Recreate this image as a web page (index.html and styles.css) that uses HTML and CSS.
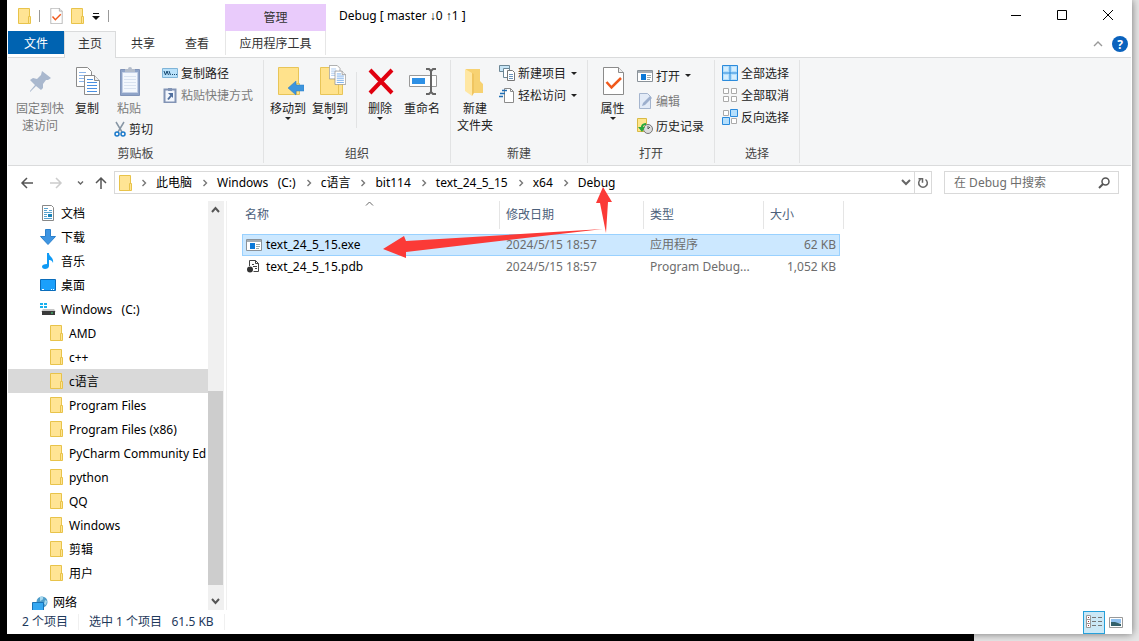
FILE: index.html
```html
<!DOCTYPE html>
<html lang="zh-CN">
<head>
  <meta charset="UTF-8" />
  <meta name="viewport" content="width=device-width, initial-scale=1.0" />
  <title>Debug</title>
  <link rel="stylesheet" href="styles.css">
</head>
<body>
  <!-- shared icons -->
  <svg class="defs" width="0" height="0">
    <symbol id="i-folder" viewBox="0 0 13 16">
      <path d="M.5 .5h11v15h-11z" fill="#ffe494" stroke="#e8c34a"/>
      <path d="M10.500 8.500h2v7h-2z" fill="#ffe494" stroke="#e8c34a"/>
    </symbol>
    <symbol id="i-check" viewBox="0 0 21 28">
      <path d="M.5 .5h15l5 5v22h-20z" fill="#fff" stroke="#8b8b8b"/>
      <path d="M15.500 .5v5h5" fill="#eee" stroke="#8b8b8b"/>
      <path d="M3.500 15l5 5.500 9.500-9.500" fill="none" stroke="#f0591c" stroke-width="2.500"/>
    </symbol>
    <symbol id="i-chev" viewBox="0 0 6 8">
      <path d="M1.500 1l3 3-3 3" fill="none" stroke="#777" stroke-width="1.400"/>
    </symbol>
    <symbol id="i-docs" viewBox="0 0 24 28">
      <path d="M.5 .5h11l4 4v15h-15z" fill="#fff" stroke="#8b8b8b"/>
      <path d="M3 5.500h7M3 8.500h8M3 11.500h8M3 14.500h8" stroke="#8ab4ea"/>
      <path d="M8.500 8.500h10l5 5v14h-15z" fill="#fff" stroke="#8b8b8b"/>
      <path d="M18.500 8.500v5h5" fill="#eee" stroke="#8b8b8b"/>
      <path d="M11 12.500h6M11 15.500h10M11 18.500h10M11 21.500h10M11 24.500h10" stroke="#4a90e2"/>
    </symbol>
    <symbol id="i-app" viewBox="0 0 16 12">
      <path d="M.5 .5h15v11h-15z" fill="#fff" stroke="#8a9299"/>
      <path d="M1 1h14v2h-14z" fill="#a5adb3"/>
      <path d="M4 4h5v6h-5z" fill="#0a78d7"/>
      <path d="M10 5.500h4M10 7.500h4M10 9.500h3" stroke="#9aa"/>
    </symbol>
  </svg>

  <main class="window">
    <header class="titlebar">
      <div class="quick">
        <svg class="folder" width="13" height="16"><use href="#i-folder"/></svg>
        <span class="bar"></span>
        <button aria-label="属性"><svg width="13" height="16"><use href="#i-check"/></svg></button>
        <button aria-label="新建文件夹"><svg width="13" height="16"><use href="#i-folder"/></svg></button>
        <button aria-label="自定义快速访问工具栏"><svg width="8" height="8"><path d="M1 1.500h6" stroke="#111"/><path d="M0 4h8l-4 4z" fill="#111"/></svg></button>
        <span class="bar"></span>
      </div>
      <div class="context">管理</div>
      <h1>Debug [ master <span class="arr">↓</span>0 <span class="arr">↑</span>1 ]</h1>
      <div class="controls">
        <button aria-label="最小化"><svg width="12" height="12"><path d="M1 5.500h10" stroke="#000"/></svg></button>
        <button aria-label="最大化"><svg width="12" height="12"><path d="M1.500 .5h9v9h-9z" fill="none" stroke="#000"/></svg></button>
        <button aria-label="关闭"><svg width="12" height="12"><path d="M1 0l10 10M11 0L1 10" stroke="#000"/></svg></button>
      </div>
    </header>

    <nav class="tabs">
      <button class="file">文件</button>
      <button class="active">主页</button>
      <button>共享</button>
      <button>查看</button>
      <button class="tools">应用程序工具</button>
      <div class="help">
        <button aria-label="最小化功能区"><svg width="10" height="6"><path d="M1 5l4-4 4 4" fill="none" stroke="#999" stroke-width="1.400"/></svg></button>
        <button aria-label="帮助" class="ask">?</button>
      </div>
    </nav>

    <section class="ribbon">
      <div class="group">
        <div class="tools-row">
          <button class="big off pin">
            <svg width="32" height="32" viewBox="0 0 32 32"><path d="M18 6l9 7-3 2-2 0-3 4 0 4-2 2-5-4-6 6 0-1 5-6-5-5 3-2 4 1 4-4z" fill="#a9b8ce"/></svg>
            固定到快<br>速访问
          </button>
          <button class="big copy"><svg width="32" height="32" viewBox="-5 -2 32 32"><use href="#i-docs" width="24" height="28"/></svg>复制</button>
          <div class="paste">
            <button class="big off">
              <svg width="32" height="32" viewBox="-1 0 32 32"><path d="M6.500 4.500h19v26h-19z" fill="#8ea3c8" stroke="#8093b8"/><path d="M8.500 7.500h15v20h-15z" fill="#f3f7fd" stroke="#c4d0e6"/><path d="M10 11.500h12M10 14.500h12M10 17.500h12M10 20.500h12M10 23.500h12" stroke="#d9e2f0"/><path d="M11 7V4h3a2 2 0 014 0h3v3z" fill="#b3bccb"/></svg>
              粘贴
            </button>
            <button class="small cut">
              <svg width="12" height="16"><path d="M2 1l6 10M10 1L4 11" stroke="#8796a5" stroke-width="1.500"/><circle cx="3" cy="13" r="2" fill="none" stroke="#1979ca" stroke-width="1.500"/><circle cx="9" cy="13" r="2" fill="none" stroke="#1979ca" stroke-width="1.500"/></svg>
              剪切
            </button>
          </div>
          <div class="stack">
            <button class="small"><svg width="16" height="16"><path d="M.5 3.500h15v9h-15z" fill="#b9e1fa" stroke="#7fb4d8"/><path d="M2 6l1.500 4 1.500-4 1.500 4M7 6l1.500 4M10 9.500h1M12 9.500h1M14 9.500h1" fill="none" stroke="#16476f"/></svg>复制路径</button>
            <button class="small off"><svg width="16" height="16"><path d="M2.500 2.500h11v13h-11z" fill="#f3f7fd" stroke="#8294b5" stroke-width="2"/><path d="M6 1h4v3h-4z" fill="#8294b5"/><path d="M6 12.500l4-5" fill="none" stroke="#506f9e" stroke-width="2"/><path d="M6 6h5v5z" fill="#506f9e"/></svg>粘贴快捷方式</button>
          </div>
        </div>
        <div class="name">剪贴板</div>
      </div>

      <div class="group">
        <div class="tools-row">
          <button class="big caret">
            <svg width="32" height="32" viewBox="-2 0 32 32"><path d="M4.500 2.500h20v27h-20z" fill="#ffe28c" stroke="#e8c558"/><path d="M22.500 18.500h3v11h-3z" fill="#ffe28c" stroke="#e8c558"/><path d="M14 23l8-7v4h8v6h-8v4z" fill="#3e95dd" stroke="#2a7cc4" stroke-width=".5"/></svg>
            移动到
          </button>
          <button class="big caret">
            <svg width="32" height="32" viewBox="-2 0 32 32"><path d="M4.500 2.500h18v27h-18z" fill="#ffe28c" stroke="#e8c558"/><path d="M22.500 18.500h4v11h-4z" fill="#ffe28c" stroke="#e8c558"/><use href="#i-docs" x="13" y="0" width="17" height="20"/></svg>
            复制到
          </button>
          <span class="split"></span>
          <button class="big caret del">
            <svg width="32" height="32" viewBox="0 0 32 32"><path d="M6 5l22 23M28 5L6 28" stroke="#e0000f" stroke-width="4"/></svg>
            删除
          </button>
          <button class="big rename">
            <svg width="32" height="32" viewBox="0 0 32 32"><path d="M3.500 10.500h27v11h-27z" fill="#fff" stroke="#999"/><path d="M6 13h13v6h-13z" fill="#2e90e5"/><path d="M20 4h3l2 2 2-2h3M20 29h3l2-2 2 2h3M25 5v23" fill="none" stroke="#666" stroke-width="2"/></svg>
            重命名
          </button>
        </div>
        <div class="name">组织</div>
      </div>

      <div class="group">
        <div class="tools-row">
          <button class="big new">
            <svg width="32" height="32" viewBox="0 0 32 32"><path d="M7 4h14v12l3 3v9H9z" fill="#f7d272"/><path d="M6 4l7 4v23l-7-5z" fill="#ffe7a3"/><path d="M13 8l2 1v19l-2 3z" fill="#f0c560"/></svg>
            新建<br>文件夹
          </button>
          <div class="stack">
            <button class="small"><svg width="16" height="16"><path d="M.5 .5h10v6h-10z" fill="#c8e6f7" stroke="#6c8796"/><path d="M4.500 3.500h6v9h-6z" fill="#fff" stroke="#6c8796"/><path d="M8.500 5.500h5l2 2v8h-7z" fill="#fff" stroke="#777"/><path d="M10 9.500h4M10 11.500h4M10 13.500h4" stroke="#6a94bd"/></svg>新建项目<i class="tri"></i></button>
            <button class="small"><svg width="16" height="16"><path d="M5.500 1.500h6l3 3v11h-9z" fill="#fff" stroke="#8b8b8b"/><path d="M11.500 1.500v3h3" fill="none" stroke="#8b8b8b"/><path d="M3 3.500h5M1 6.500h5M0 9.500h4" stroke="#206fb5" stroke-width="1.500"/></svg>轻松访问<i class="tri"></i></button>
          </div>
        </div>
        <div class="name">新建</div>
      </div>

      <div class="group">
        <div class="tools-row">
          <button class="big caret prop"><svg width="32" height="32" viewBox="-6 -2 32 32"><use href="#i-check" width="21" height="28"/></svg>属性</button>
          <div class="stack tall">
            <button class="small"><svg width="16" height="12"><use href="#i-app"/></svg>打开<i class="tri"></i></button>
            <button class="small off"><svg width="16" height="16"><path d="M2.500 .5h8l3 3v12h-11z" fill="#e3ebf7" stroke="#a5b5ce"/><path d="M5 13l1-3 7-7 2 2-7 7z" fill="#9dafcd"/></svg>编辑</button>
            <button class="small"><svg width="16" height="16"><path d="M.5 .5h9v13h-9z" fill="#ffe68c" stroke="#d9ba45"/><circle cx="11" cy="11" r="4.500" fill="#ddd" stroke="#777"/><path d="M11 8v3l2-2" fill="none" stroke="#555"/><path d="M9 5C4 5 4 9 4 9H1l4 5 3-5H6c0-2 3-2 3-2z" fill="#28a83c"/></svg>历史记录</button>
          </div>
        </div>
        <div class="name">打开</div>
      </div>

      <div class="group">
        <div class="tools-row">
          <div class="stack pick">
            <button class="small"><svg width="16" height="16"><path d="M.5 .5h15v15h-15zM8 0v16M0 8h16" fill="#b5dffc" stroke="#2b8bdc"/><path d="M2 2h4v4h-4zM10 2h4v4h-4zM2 10h4v4h-4zM10 10h4v4h-4z" fill="#d5eefe"/></svg>全部选择</button>
            <button class="small"><svg width="16" height="16"><path d="M1.500 1.500h5v5h-5zM9.500 1.500h5v5h-5zM1.500 9.500h5v5h-5zM9.500 9.500h5v5h-5z" fill="#fff" stroke="#aaa"/></svg>全部取消</button>
            <button class="small"><svg width="16" height="16"><path d="M1.500 1.500h5v5h-5zM9.500 9.500h5v5h-5z" fill="#fff" stroke="#aaa"/><path d="M8.500 .5h7v7h-7zM.5 8.500h7v7h-7z" fill="#b5dffc" stroke="#2b8bdc"/></svg>反向选择</button>
          </div>
        </div>
        <div class="name">选择</div>
      </div>
    </section>

    <section class="address">
      <div class="moves">
        <button aria-label="后退"><svg width="14" height="12"><path d="M13 6H2M7 1L2 6l5 5" fill="none" stroke="#555" stroke-width="1.500"/></svg></button>
        <button aria-label="前进"><svg width="14" height="12"><path d="M1 6h11M7 1l5 5-5 5" fill="none" stroke="#ccc" stroke-width="1.500"/></svg></button>
        <button aria-label="最近浏览的位置" class="recent"><svg width="7" height="6"><path d="M1 1.500l2.500 2.500 2.500-2.500" fill="none" stroke="#666" stroke-width="1.400"/></svg></button>
        <button aria-label="上移" class="up"><svg width="12" height="13"><path d="M6 13V2M1 7l5-5 5 5" fill="none" stroke="#555" stroke-width="1.500"/></svg></button>
      </div>
      <div class="path">
        <svg width="13" height="16"><use href="#i-folder"/></svg>
        <svg class="sep first" width="6" height="8"><use href="#i-chev"/></svg>
        <a href="#">此电脑</a><svg class="sep" width="6" height="8"><use href="#i-chev"/></svg>
        <a href="#">Windows&nbsp;&nbsp; (C:)</a><svg class="sep" width="6" height="8"><use href="#i-chev"/></svg>
        <a href="#">c语言</a><svg class="sep" width="6" height="8"><use href="#i-chev"/></svg>
        <a href="#">bit114</a><svg class="sep" width="6" height="8"><use href="#i-chev"/></svg>
        <a href="#">text_24_5_15</a><svg class="sep" width="6" height="8"><use href="#i-chev"/></svg>
        <a href="#">x64</a><svg class="sep" width="6" height="8"><use href="#i-chev"/></svg>
        <a href="#">Debug</a>
        <button aria-label="上一个位置" class="drop"><svg width="10" height="7"><path d="M1 1l4 4 4-4" fill="none" stroke="#666" stroke-width="2"/></svg></button>
        <button aria-label="刷新" class="refresh"><svg width="12" height="12"><path d="M8.500 2.500a4.300 4.300 0 11-5 0M1.500 1.700h4v4" fill="none" stroke="#666" stroke-width="1.500"/></svg></button>
      </div>
      <label class="search">
        <input type="text" placeholder="在 Debug 中搜索" aria-label="搜索">
        <svg width="12" height="12"><circle cx="7.500" cy="4.500" r="3.500" fill="none" stroke="#555" stroke-width="1.500"/><path d="M5 7l-4 4" stroke="#555" stroke-width="2"/></svg>
      </label>
    </section>

    <section class="content">
      <aside class="tree">
        <ul>
          <li><a href="#"><svg width="16" height="16"><path d="M2.500 .5h9l2 2v13h-11z" fill="#fff" stroke="#888"/><path d="M4 3.500h4M4 5.500h3M9 5.500h3M4 7.500h8M4 9.500h3M4 11.500h3M4 13.500h8" stroke="#58a3cf"/><path d="M8 9h4v3h-4z" fill="#1b82b8"/></svg>文档</a></li>
          <li><a href="#"><svg width="16" height="16"><path d="M5.500 .5h5v7h5L8 15.500.5 7.500h5z" fill="#3e95e2" stroke="#2b80cd"/></svg>下载</a></li>
          <li><a href="#"><svg width="16" height="16"><path d="M7 0h2c0 4 5 4 4 10-1-3-3-3-4-3v6c0 2-2 3-4 3s-3-1-3-2.500S4 11 7 11z" fill="#0f9af5"/></svg>音乐</a></li>
          <li><a href="#"><svg width="16" height="16"><path d="M.5 2.500h15v11h-15z" fill="#1ba0fb" stroke="#0a6dbb"/><path d="M2 12.500h2M11 12.500h1M13 12.500h1" stroke="#fff"/></svg>桌面</a></li>
          <li><a href="#"><svg width="16" height="16"><path d="M0 2h3v2h-3zM4 2h3v2h-3zM0 5h3v2h-3zM4 5h3v2h-3z" fill="#18b0ee"/><path d="M3 8h11l2 3H1z" fill="#c6c6c6"/><path d="M2 10h13v4h-13z" fill="#3a3a3a"/><path d="M11 12h2" stroke="#44e07a"/></svg>Windows&nbsp;&nbsp; (C:)</a></li>
          <li class="sub"><a href="#"><svg width="13" height="16"><use href="#i-folder"/></svg>AMD</a></li>
          <li class="sub"><a href="#"><svg width="13" height="16"><use href="#i-folder"/></svg>c++</a></li>
          <li class="sub on"><a href="#"><svg width="13" height="16"><use href="#i-folder"/></svg>c语言</a></li>
          <li class="sub"><a href="#"><svg width="13" height="16"><use href="#i-folder"/></svg>Program Files</a></li>
          <li class="sub"><a href="#"><svg width="13" height="16"><use href="#i-folder"/></svg>Program Files (x86)</a></li>
          <li class="sub"><a href="#"><svg width="13" height="16"><use href="#i-folder"/></svg>PyCharm Community Ed</a></li>
          <li class="sub"><a href="#"><svg width="13" height="16"><use href="#i-folder"/></svg>python</a></li>
          <li class="sub"><a href="#"><svg width="13" height="16"><use href="#i-folder"/></svg>QQ</a></li>
          <li class="sub"><a href="#"><svg width="13" height="16"><use href="#i-folder"/></svg>Windows</a></li>
          <li class="sub"><a href="#"><svg width="13" height="16"><use href="#i-folder"/></svg>剪辑</a></li>
          <li class="sub"><a href="#"><svg width="13" height="16"><use href="#i-folder"/></svg>用户</a></li>
          <li class="net"><a href="#"><svg width="16" height="16"><circle cx="10" cy="7" r="5.500" fill="#4f9dc9"/><path d="M8 2c2-1 4 0 3 2s-3 1-3 3M13 5l2 1-1 4-2-1z" fill="#a7d8ee"/><path d="M.5 7.500h11v8h-11z" fill="#35a8f2" stroke="#1a72b5"/></svg>网络</a></li>
        </ul>
      </aside>
      <div class="scroll">
        <button aria-label="向上滚动"><svg width="9" height="7"><path d="M1 6l3.500-4 3.500 4" fill="none" stroke="#555" stroke-width="2"/></svg></button>
        <div class="track"><div class="thumb"></div></div>
        <button aria-label="向下滚动"><svg width="9" height="7"><path d="M1 1l3.500 4 3.500-4" fill="none" stroke="#555" stroke-width="2"/></svg></button>
      </div>
      <div class="files">
        <table>
          <thead>
            <tr>
              <th class="c-name">名称<svg class="sort" width="9" height="5"><path d="M1 4.500l3.500-3.500 3.500 3.500" fill="none" stroke="#666"/></svg></th>
              <th class="c-date">修改日期</th>
              <th class="c-type">类型</th>
              <th class="c-size">大小</th>
              <th class="c-end"></th>
            </tr>
          </thead>
          <tbody>
            <tr class="on">
              <td><svg width="16" height="12"><use href="#i-app"/></svg>text_24_5_15.exe</td>
              <td>2024/5/15 18:57</td>
              <td>应用程序</td>
              <td>62 KB</td>
            </tr>
            <tr>
              <td><svg width="16" height="14"><path d="M3.500 7V1.500h6l3 3v8h-5" fill="#fff" stroke="#444"/><path d="M9.500 1.500v3h3M6 5.500h2M7 7.500h4M9 9.500h2" fill="none" stroke="#444"/><circle cx="4" cy="10.500" r="3" fill="#333"/></svg>text_24_5_15.pdb</td>
              <td>2024/5/15 18:57</td>
              <td>Program Debug...</td>
              <td>1,052 KB</td>
            </tr>
          </tbody>
        </table>
      </div>
    </section>

    <footer class="status">
      <span>2 个项目</span>
      <span>选中 1 个项目&nbsp;&nbsp; 61.5 KB</span>
      <div class="views">
        <button aria-label="详细信息" class="on"><svg width="16" height="14"><path d="M.5 .5h4v12h-4zM.5 4.500h4M.5 8.500h4" fill="#fff" stroke="#999"/><path d="M2 2.500h1M2 6.500h1M2 10.500h1" stroke="#a33"/><path d="M6 2.500h4M12 2.500h4M6 6.500h4M12 6.500h4M6 10.500h4M12 10.500h4" stroke="#777"/></svg></button>
        <button aria-label="大图标"><svg width="14" height="11"><path d="M.5 .5h13v10h-13z" fill="#fff" stroke="#999"/><path d="M2 2h10v4h-10z" fill="#8fc0ee"/><path d="M2 5l4 0 6 2v2h-10z" fill="#34616b"/></svg></button>
      </div>
    </footer>

    <svg class="marks" width="240" height="80" viewBox="380 180 240 80">
      <path d="M383 249l21-13 2 5 197-12-197 23 0 6z" fill="#fb3a37"/>
      <path d="M603 187l9 15h-4l-2 31-6-30h-4z" fill="#fb3a37"/>
    </svg>
  </main>
</body>
</html>
```
FILE: styles.css
```css
html, body {
  margin: 0;
  padding: 0;
  height: 100%;
}
body {
  box-sizing: border-box;
  padding: 0 7px 7px;
  font-family: "Noto Sans", "Noto Sans CJK SC", sans-serif;
  font-size: 12px;
  color: #000;
  overflow: hidden;
  background: #000 linear-gradient(#e6e6e6, #e6e6e6) no-repeat right / 165px 100%;
}
button {
  font: inherit;
  color: inherit;
  background: none;
  border: 0;
  padding: 0;
  display: flex;
  align-items: center;
  justify-content: center;
}
a {
  color: inherit;
  text-decoration: none;
}
svg {
  display: block;
  flex: none;
}
.defs {
  position: absolute;
}
.window {
  position: relative;
  box-sizing: border-box;
  height: 100%;
  padding: 0 1px;
  display: flex;
  flex-direction: column;
  background: #fff;
  box-shadow: 0 0 8px rgba(0,0,0,0.5);
}

/* title bar */
.titlebar {
  display: flex;
  height: 31px;
  align-items: center;
}
.quick {
  display: flex;
  align-items: center;
  box-sizing: border-box;
  width: 217px;
  padding-left: 10px;
  gap: 8px;
}
.quick .bar {
  width: 1px;
  height: 12px;
  margin-right: 2px;
  background: #999;
}
.context {
  width: 101px;
  height: 27px;
  line-height: 27px;
  align-self: flex-end;
  text-align: center;
  background: #e9cbfb;
  color: #333;
}
.titlebar h1 {
  flex: 1;
  margin: 0 0 0 13px;
  font-size: 12px;
  font-weight: normal;
}
.arr {
  font-family: "Liberation Sans", sans-serif;
}
.controls {
  display: flex;
}
.controls button {
  width: 46px;
  height: 30px;
}

/* tabs */
.tabs {
  display: flex;
  height: 26px;
  color: #333;
}
.tabs button {
  width: 54px;
  height: 24px;
}
.tabs .file {
  width: 56px;
  height: 23px;
  background: #0063b1;
  color: #fff;
}
.tabs .active {
  box-sizing: border-box;
  width: 52px;
  height: 27px;
  padding-bottom: 4px;
  border: 1px solid #dadbdc;
  border-bottom: 0;
  background: #f5f6f7;
  position: relative;
  z-index: 1;
}
.tabs .tools {
  box-sizing: border-box;
  width: 101px;
  margin-left: 1px;
  border: solid #e6e6e6;
  border-width: 0 1px;
}
.help {
  display: flex;
  align-items: center;
  margin-left: auto;
  gap: 9px;
  padding-right: 3px;
}
.tabs .help button {
  width: 10px;
}
.tabs .help .ask {
  width: 16px;
  height: 16px;
  border-radius: 50%;
  background: #0a62bd;
  color: #fff;
  font-weight: bold;
}

/* ribbon */
.ribbon {
  display: flex;
  padding: 2px 0;
  height: 103px;
  border: solid #dadbdc;
  border-width: 1px 0;
  background: #f5f6f7;
  color: #222;
}
.group {
  display: flex;
  flex-direction: column;
  border-right: 1px solid #e2e3e4;
}
.tools-row {
  display: flex;
  height: 85px;
}
.name {
  line-height: 18px;
  text-align: center;
  color: #444;
}
.big {
  flex-direction: column;
  justify-content: flex-start;
  align-self: flex-start;
  width: 42px;
  padding-top: 5px;
  line-height: 17px;
  white-space: nowrap;
}
.big svg {
  margin-bottom: 3px;
}
.big.pin {
  width: 64px;
}
.big.copy {
  width: 30px;
}
.big.caret::after, .tri {
  content: "";
  border: 3px solid transparent;
  border-top-color: #222;
  border-bottom: 0;
}
.big.del {
  width: 38px;
}
.big.rename {
  width: 46px;
}
.big.new {
  width: 48px;
}
.big.prop {
  width: 49px;
}
.off {
  color: #7b7b7b;
}
.split {
  width: 1px;
  height: 56px;
  margin: 12px 4px 0 5px;
  background: #e2e3e4;
}
.group:nth-child(2) .tools-row {
  padding: 0 5px 0 3px;
}
.group:nth-child(3) .tools-row, .group:nth-child(4) .tools-row {
  padding-right: 10px;
}
.paste .big {
  width: 54px;
}
.paste .small {
  height: 24px;
  margin-left: 12px;
}
.small {
  justify-content: flex-start;
  height: 22px;
  gap: 3px;
  white-space: nowrap;
}
.stack {
  padding: 2px 0 0;
}
.paste + .stack {
  padding-left: 6px;
  padding-right: 10px;
}
.stack.tall {
  padding-top: 3px;
}
.stack.tall .small {
  height: 25px;
}
.stack.pick {
  padding: 2px 10px 0 7px;
}
.tri {
  margin-left: 2px;
}

/* address bar */
.address {
  display: flex;
  align-items: center;
  height: 23px;
  padding: 5px 12px 7px;
  line-height: 17px;
}
.moves {
  display: flex;
  width: 94px;
  align-items: center;
  gap: 15px;
}
.moves .recent {
  margin-left: -1px;
}
.moves .up {
  margin-left: -4px;
}
.path {
  flex: 1;
  display: flex;
  align-items: center;
  height: 21px;
  padding-left: 4px;
  border: 1px solid #d9d9d9;
}
.sep {
  margin: 0 9px 0 10px;
}
.sep.first {
  margin-left: 9px;
}
.drop {
  width: 16px;
  height: 21px;
  margin-left: auto;
}
.refresh {
  width: 17px;
  height: 21px;
  border-left: 1px solid #d9d9d9;
}
.search {
  box-sizing: border-box;
  display: flex;
  align-items: center;
  width: 175px;
  height: 23px;
  margin-left: 12px;
  padding: 0 8px 0 9px;
  border: 1px solid #d9d9d9;
}
.search input {
  flex: 1;
  min-width: 0;
  padding: 0;
  border: 0;
  outline: 0;
  background: none;
  font: inherit;
}
.search input::placeholder {
  color: #6d6d6d;
}

/* content */
.content {
  flex: 1;
  display: flex;
  min-height: 0;
}
.tree {
  width: 200px;
  overflow: hidden;
}
.tree ul {
  margin: 0;
  padding: 0;
  list-style: none;
}
.tree a {
  display: flex;
  align-items: center;
  height: 24px;
  padding-left: 32px;
  gap: 5px;
  white-space: nowrap;
}
.tree .sub a {
  padding-left: 42px;
  gap: 6px;
}
.tree .on {
  background: #d9d9d9;
}
.tree .net a {
  height: 14px;
  line-height: 14px;
  margin-top: 11px;
  padding-left: 24px;
}
.scroll {
  display: flex;
  flex-direction: column;
  width: 16px;
  background: #f0f0f0;
}
.scroll button {
  width: 15px;
  height: 17px;
}
.track {
  flex: 1;
  display: flex;
  flex-direction: column;
  justify-content: flex-end;
  padding-bottom: 8px;
}
.thumb {
  width: 15px;
  height: 53%;
  background: #cdcdcd;
}
.files {
  flex: 1;
  margin-left: 2px;
  padding-left: 15px;
  border-left: 1px solid #f0f0f0;
}
table {
  table-layout: fixed;
  width: 602px;
  border-spacing: 0;
  line-height: 17px;
  white-space: nowrap;
}
th {
  box-sizing: border-box;
  height: 28px;
  padding: 0 6px 2px;
  text-align: left;
  font-weight: normal;
  color: #4c607a;
  border-right: 1px solid #e5e5e5;
}
.c-name {
  position: relative;
  width: 258px;
  padding-left: 3px;
}
.c-date {
  width: 144px;
}
.c-type {
  width: 120px;
}
.c-size {
  width: 76px;
  border-right: 0;
}
.c-end {
  width: 4px;
  padding: 0;
}
.c-size {
  border-right: 0;
}
.sort {
  position: absolute;
  top: 0;
  left: 123px;
}
thead::after {
  content: "";
  display: block;
  height: 5px;
}
td {
  box-sizing: border-box;
  height: 21px;
  padding: 0 6px 1px;
  color: #6d6d6d;
}
td:first-child {
  padding-left: 4px;
  color: #000;
}
td:first-child svg {
  display: inline-block;
  margin-right: 4px;
  vertical-align: -2px;
}
td:nth-child(4) {
  padding-right: 4px;
  text-align: right;
}
.on td {
  height: 22px;
  background: #cce8ff;
  border: solid #99d1ff;
  border-width: 1px 0;
}
.on td:first-child {
  border-left-width: 1px;
  padding-left: 3px;
}
.on td:nth-child(4) {
  border-right-width: 1px;
  padding-right: 3px;
}

/* status bar */
.status {
  display: flex;
  align-items: center;
  height: 24px;
  padding-left: 14px;
  color: #1e395b;
}
.status span {
  padding-right: 10px;
  margin-right: 10px;
  line-height: 16px;
  border-right: 1px solid #f0f0f0;
}
.views {
  display: flex;
  margin-left: auto;
  padding-right: 4px;
}
.views button {
  box-sizing: border-box;
  width: 22px;
  height: 23px;
}
.views .on {
  border: 1px solid #26a0da;
  background: #cbe8f6;
}

/* red arrows over the path and the exe row */
.marks {
  position: absolute;
  left: 373px;
  top: 180px;
  pointer-events: none;
}
```
